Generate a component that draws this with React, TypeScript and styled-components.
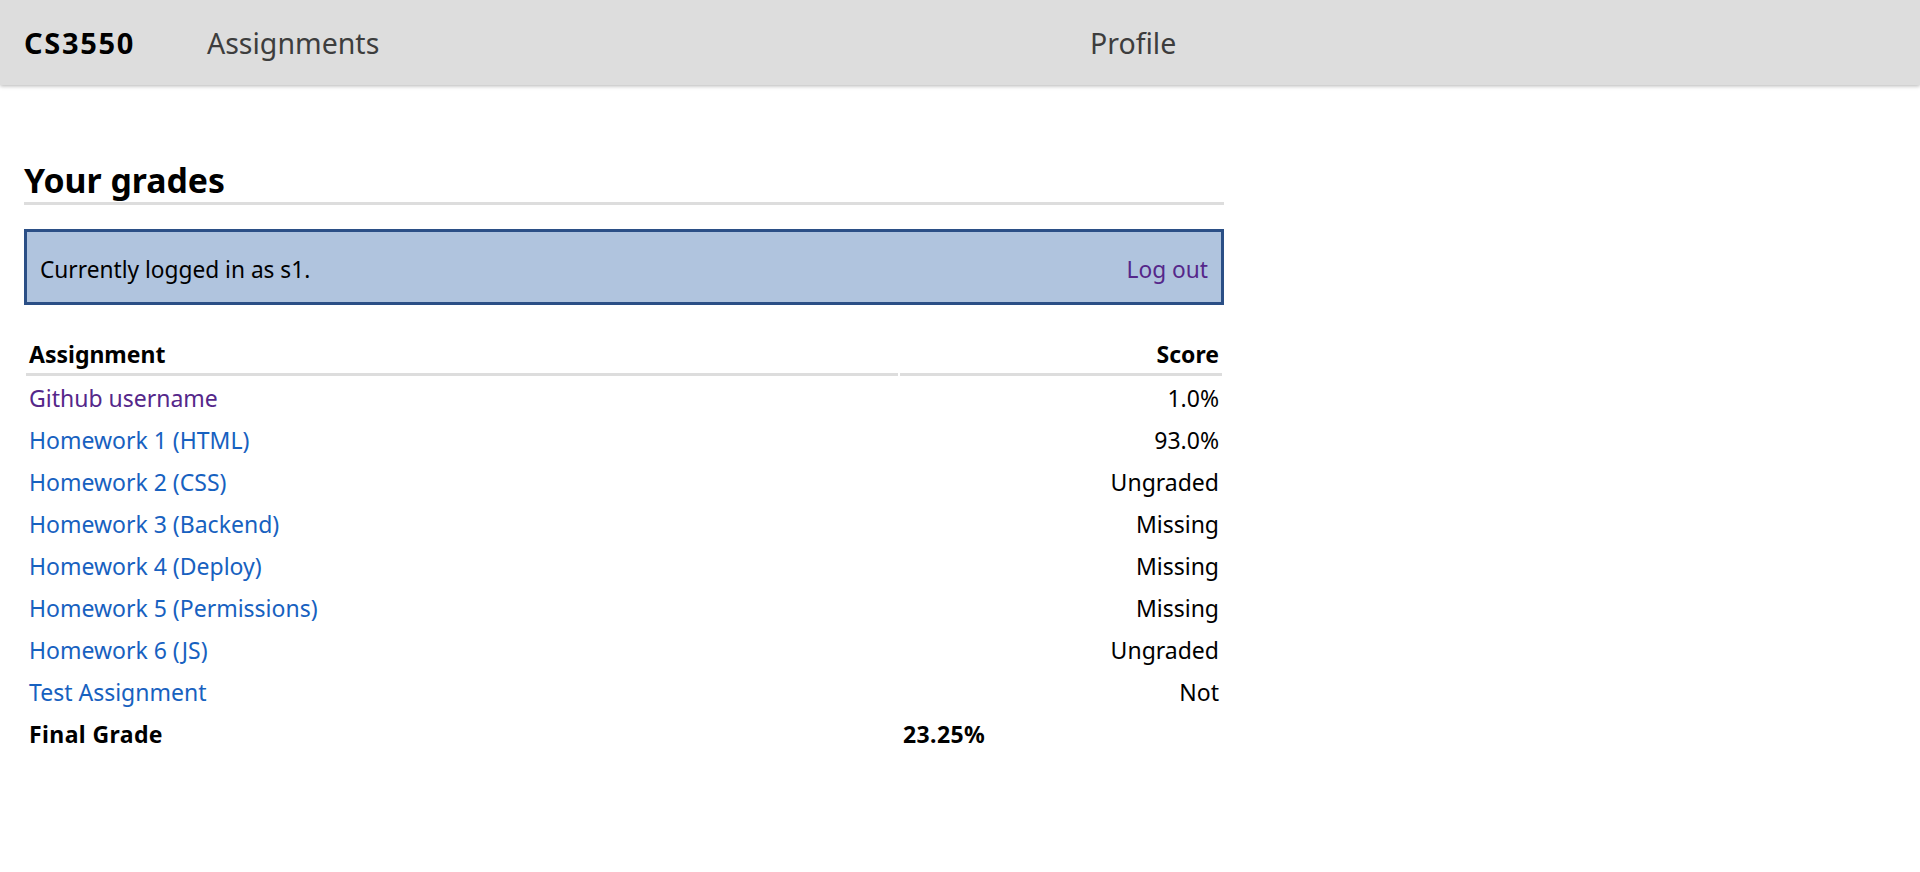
import React from "react";
import styled, { createGlobalStyle } from "styled-components";

const GlobalStyle = createGlobalStyle`
  html, body {
    margin: 0;
    padding: 0;
    background: #ffffff;
  }
  body {
    font-family: "Noto Sans", "Open Sans", "Liberation Sans", sans-serif;
    color: #000000;
  }
`;

const Header = styled.header`
  height: 85px;
  background: #dddddd;
  box-shadow: 0 1px 4px rgba(0, 0, 0, 0.3);
  display: flex;
  align-items: center;
  padding: 0 24px;
  box-sizing: border-box;
`;

const Brand = styled.a`
  flex: 0 0 183px;
  font-size: 29px;
  letter-spacing: 1.7px;
  font-weight: 700;
  color: #000000;
  text-decoration: none;
`;

const NavList = styled.nav`
  display: grid;
  grid-template-columns: 883px auto;
  align-items: center;
`;

const NavLink = styled.a`
  font-size: 28.5px;
  font-weight: 400;
  color: #3d3d3d;
  text-decoration: none;
`;

const Main = styled.main`
  width: 1200px;
  padding: 0 24px;
`;

const Title = styled.h1`
  margin: 76px 0 0;
  padding-bottom: 3px;
  font-size: 33.8px;
  line-height: 38.4px;
  font-weight: 700;
  border-bottom: 3px solid #dddddd;
`;

const SessionBox = styled.div`
  margin-top: 24px;
  height: 76px;
  box-sizing: border-box;
  border: 3px solid #2b4f86;
  background: #b0c4de;
  display: flex;
  align-items: center;
  justify-content: space-between;
  padding: 4px 13px 0;
  font-size: 22.7px;
`;

const Link = styled.a<{ $visited?: boolean }>`
  color: ${(p) => (p.$visited ? "#55278a" : "#1761c0")};
  text-decoration: none;
`;

const GradeTable = styled.table`
  margin-top: 27px;
  width: 1200px;
  border-spacing: 2px;
  font-size: 23px;
  line-height: 30px;
`;

const HeadCell = styled.th<{ $align: "left" | "right" }>`
  text-align: ${(p) => p.$align};
  font-weight: 700;
  padding: 5px 3px 4px;
  border-bottom: 3px solid #dddddd;
`;

const Cell = styled.td<{ $align?: "left" | "right"; $bold?: boolean }>`
  text-align: ${(p) => p.$align ?? "left"};
  font-weight: ${(p) => (p.$bold ? 700 : 400)};
  letter-spacing: ${(p) => (p.$bold ? "0.4px" : "0")};
  padding: 5px 3px;
`;

const grades = [
  { name: "Github username", score: "1.0%", visited: true },
  { name: "Homework 1 (HTML)", score: "93.0%" },
  { name: "Homework 2 (CSS)", score: "Ungraded" },
  { name: "Homework 3 (Backend)", score: "Missing" },
  { name: "Homework 4 (Deploy)", score: "Missing" },
  { name: "Homework 5 (Permissions)", score: "Missing" },
  { name: "Homework 6 (JS)", score: "Ungraded" },
  { name: "Test Assignment", score: "Not" },
];

export default function App() {
  return (
    <>
      <GlobalStyle />
      <Header>
        <Brand href="#">CS3550</Brand>
        <NavList>
          <NavLink href="#">Assignments</NavLink>
          <NavLink href="#">Profile</NavLink>
        </NavList>
      </Header>
      <Main>
        <Title>Your grades</Title>
        <SessionBox>
          <span>Currently logged in as s1.</span>
          <Link href="#" $visited>
            Log out
          </Link>
        </SessionBox>
        <GradeTable>
          <thead>
            <tr>
              <HeadCell $align="left" style={{ width: 866 }}>
                Assignment
              </HeadCell>
              <HeadCell $align="right">Score</HeadCell>
            </tr>
          </thead>
          <tbody>
            {grades.map((g) => (
              <tr key={g.name}>
                <Cell>
                  <Link href="#" $visited={g.visited}>
                    {g.name}
                  </Link>
                </Cell>
                <Cell $align="right">{g.score}</Cell>
              </tr>
            ))}
            <tr>
              <Cell $bold>Final Grade</Cell>
              <Cell $bold>23.25%</Cell>
            </tr>
          </tbody>
        </GradeTable>
      </Main>
    </>
  );
}
